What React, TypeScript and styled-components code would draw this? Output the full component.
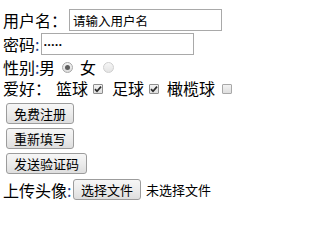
import React from "react";
import styled, { createGlobalStyle } from "styled-components";

const Global = createGlobalStyle`
  html, body { margin: 0; padding: 0; background: #ffffff; }
  body {
    font-family: "Noto Sans CJK SC", "Microsoft YaHei", sans-serif;
    color: #000000;
  }
`;

const Page = styled.form`
  display: flex;
  flex-direction: column;
  padding: 8px 0 0 3px;
  width: 252px;
  box-sizing: border-box;
  font-size: 16px;
`;

const Row = styled.div<{ $h: number }>`
  display: flex;
  align-items: center;
  height: ${(p) => p.$h}px;
  white-space: nowrap;
  line-height: 16px;
`;

const Label = styled.span<{ $mr?: number }>`
  display: inline-block;
  margin-right: ${(p) => p.$mr ?? 0}px;
`;

const Colon = styled.span`
  display: inline-block;
  width: 4px;
  color: #1a3d8f;
`;

const TextInput = styled.input<{ $w: number }>`
  box-sizing: border-box;
  width: ${(p) => p.$w}px;
  height: 22px;
  margin: 0 0 0 2px;
  padding: 0 3px;
  border: 1px solid #a9a9a9;
  border-radius: 0;
  background: #ffffff;
  font-family: "Noto Sans CJK SC", sans-serif;
  font-size: 12.5px;
  color: #000000;
  outline: none;
`;

const PasswordInput = styled(TextInput)`
  font-family: "Liberation Sans", sans-serif;
  font-size: 7.5px;
  letter-spacing: 1.1px;
  padding-left: 2px;
`;

const RadioBox = styled.span<{ $on: boolean }>`
  box-sizing: border-box;
  display: inline-flex;
  align-items: center;
  justify-content: center;
  width: 11px;
  height: 11px;
  border-radius: 50%;
  margin: 0 7px;
  border: 1px solid ${(p) => (p.$on ? "#a8a8a8" : "#cfcfcf")};
  background: ${(p) =>
    p.$on
      ? "linear-gradient(#f4f4f4, #dcdcdc)"
      : "linear-gradient(#f6f6f6, #e4e4e4)"};
`;

const RadioDot = styled.span`
  width: 5px;
  height: 5px;
  border-radius: 50%;
  background: #5e5e5e;
`;

const CheckBox = styled.span<{ $on: boolean; $ml: number; $mr: number }>`
  box-sizing: border-box;
  display: inline-flex;
  align-items: center;
  justify-content: center;
  width: 10px;
  height: 10px;
  margin: 1px ${(p) => p.$mr}px 0 ${(p) => p.$ml}px;
  border: 1px solid ${(p) => (p.$on ? "#8e8e8e" : "#a8a8a8")};
  border-radius: 1px;
  background: linear-gradient(#f2f2f2, #dedede);
`;

const ButtonRow = styled.div<{ $mt?: number }>`
  display: flex;
  align-items: center;
  height: 25px;
  margin-top: ${(p) => p.$mt ?? 0}px;
`;

const Button = styled.button<{ $ml?: number }>`
  box-sizing: border-box;
  height: 21px;
  margin: 0 0 0 ${(p) => p.$ml ?? 3}px;
  padding: 0 7px;
  border: 1px solid #9c9c9c;
  border-radius: 3px;
  background: linear-gradient(#f6f6f6 0%, #ececec 50%, #dedede 100%);
  font-family: "Noto Sans CJK SC", sans-serif;
  font-size: 13px;
  line-height: 19px;
  color: #000000;
  white-space: nowrap;
`;

const FileRow = styled.div`
  display: flex;
  align-items: center;
  height: 27px;
  white-space: nowrap;
  line-height: 16px;
`;

const FileNote = styled.span`
  margin-left: 5px;
  font-size: 13px;
`;

function Radio({ on }: { on: boolean }) {
  return (
    <RadioBox role="radio" aria-checked={on} $on={on}>
      {on && <RadioDot />}
    </RadioBox>
  );
}

function Check({ on, ml, mr }: { on: boolean; ml: number; mr: number }) {
  return (
    <CheckBox role="checkbox" aria-checked={on} $on={on} $ml={ml} $mr={mr}>
      {on && (
        <svg width="8" height="8" viewBox="0 0 8 8">
          <path d="M1 4.2 L3 6.3 L7 1.6" fill="none" stroke="#2b2b2b" strokeWidth="1.7" />
        </svg>
      )}
    </CheckBox>
  );
}

export default function App() {
  return (
    <>
      <Global />
      <Page onSubmit={(e) => e.preventDefault()}>
        <Row $h={24}>
          <Label>用户名：</Label>
          <TextInput $w={153} type="text" defaultValue="请输入用户名" />
        </Row>
        <Row $h={24}>
          <Label>密码</Label>
          <Colon>:</Colon>
          <PasswordInput $w={153} type="password" defaultValue="12345" />
        </Row>
        <Row $h={22}>
          <Label>性别</Label>
          <Colon>:</Colon>
          <Label>男</Label>
          <Radio on={true} />
          <Label>女</Label>
          <Radio on={false} />
        </Row>
        <Row $h={20}>
          <Label $mr={5}>爱好：</Label>
          <Label>篮球</Label>
          <Check on={true} ml={5} mr={9} />
          <Label>足球</Label>
          <Check on={true} ml={5} mr={8} />
          <Label>橄榄球</Label>
          <Check on={false} ml={7} mr={0} />
        </Row>
        <ButtonRow $mt={3}>
          <Button type="button">免费注册</Button>
        </ButtonRow>
        <ButtonRow>
          <Button type="button">重新填写</Button>
        </ButtonRow>
        <ButtonRow>
          <Button type="button">发送验证码</Button>
        </ButtonRow>
        <FileRow>
          <Label>上传头像</Label>
          <Colon>:</Colon>
          <Button type="button" $ml={2}>选择文件</Button>
          <FileNote>未选择文件</FileNote>
        </FileRow>
      </Page>
    </>
  );
}
